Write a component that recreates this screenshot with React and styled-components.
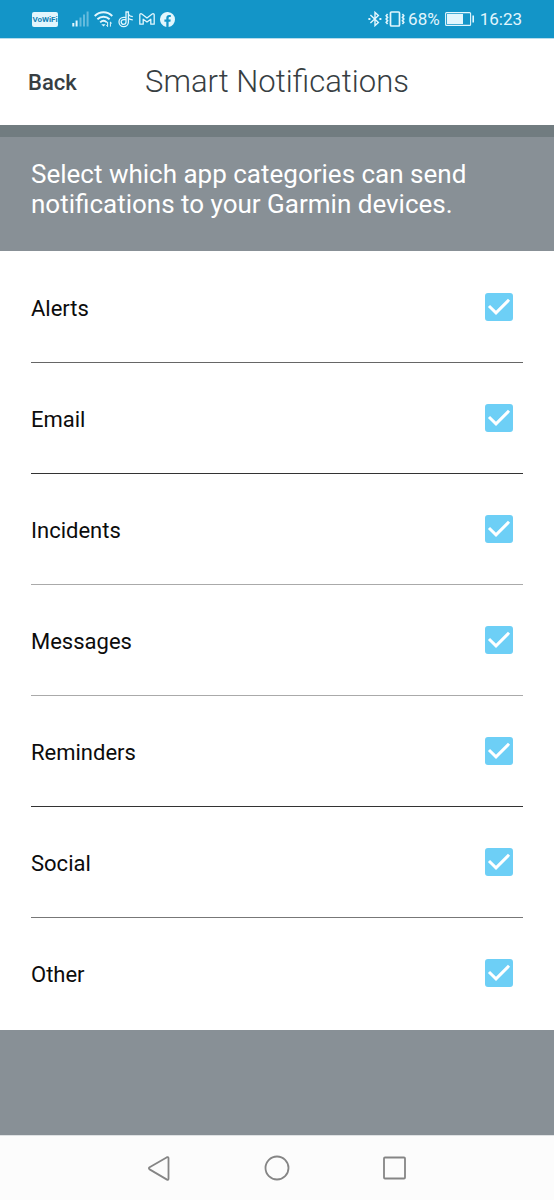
import React, { useState } from "react";
import styled, { createGlobalStyle } from "styled-components";

const GlobalStyle = createGlobalStyle`
    * {
        box-sizing: border-box;
    }
    body {
        margin: 0;
        background: #889096;
        font-family: Roboto, "Liberation Sans", sans-serif;
    }
`

const Screen = styled.div`
    display: flex;
    flex-direction: column;
    min-height: 100vh;
    background: #889096;
`

const StatusBar = styled.div`
    display: flex;
    justify-content: space-between;
    align-items: center;
    height: 39px;
    padding: 0 32px;
    background: #1395c8;
    border-bottom: 1px solid #b5dcec;
    color: #e2f6fd;
    font-size: 17px;
    line-height: 20px;
`

const StatusGroup = styled.div`
    display: flex;
    align-items: center;
    gap: ${props => props.$gap}px;

    svg {
        display: block;
    }
`

const Badge = styled.span`
    width: 26px;
    height: 15px;
    margin-right: 9px;
    border-radius: 2px;
    background: #e2f6fd;
    color: #1382b4;
    font-size: 8px;
    font-weight: 700;
    line-height: 15px;
    text-align: center;
`

const Header = styled.header`
    display: grid;
    grid-template-columns: 1fr auto 1fr;
    align-items: center;
    height: 86px;
    padding: 0 28px;
    background: #fff;
    color: #373e42;
`

const BackButton = styled.button`
    justify-self: start;
    padding: 0;
    border: none;
    background: none;
    color: inherit;
    font-family: inherit;
    font-size: 22px;
    font-weight: 500;
    cursor: pointer;
`

const Title = styled.h1`
    margin: 0;
    font-size: 31px;
    font-weight: 300;
    line-height: 40px;
`

const Intro = styled.p`
    margin: 0;
    padding: 22px 31px 32px;
    border-top: 12px solid #717c80;
    color: #fff;
    font-size: 26px;
    line-height: 30px;
`

const List = styled.ul`
    margin: 0;
    padding: 1px 31px;
    background: #fff;
    list-style: none;
`

const Row = styled.li`
    height: 111px;
    border-bottom: 1px solid ${props => props.$line};
`

const RowLabel = styled.label`
    display: flex;
    justify-content: space-between;
    align-items: center;
    height: 100%;
    padding-right: 10px;
    color: #0c0c0c;
    font-size: 22px;
    line-height: 28px;
    cursor: pointer;
`

const RowName = styled.span`
    padding-top: 4px;
`

const CheckWrap = styled.span`
    display: grid;

    > * {
        grid-area: 1 / 1;
    }
    svg {
        pointer-events: none;
    }
`

const Check = styled.input`
    appearance: none;
    width: 28px;
    height: 28px;
    margin: 0;
    border: 2px solid #6dcff6;
    border-radius: 3px;
    background: #fff;
    cursor: pointer;

    &:checked {
        background: #6dcff6;
    }
`

const NavBar = styled.nav`
    display: flex;
    justify-content: center;
    align-items: center;
    gap: 90px;
    height: 65px;
    margin-top: auto;
    border-top: 1px solid #dfe2e4;
    background: #fcfcfc;
`

const NavButton = styled.button`
    width: 28px;
    height: 28px;
    padding: 0;
    border: none;
    background: none;
    cursor: pointer;

    svg {
        display: block;
        fill: none;
        stroke: #858585;
        stroke-width: 1.8;
        stroke-linejoin: round;
    }
`

const categories = [
    { name: "Alerts", line: "#666" },
    { name: "Email", line: "#333" },
    { name: "Incidents", line: "#aaa" },
    { name: "Messages", line: "#aaa" },
    { name: "Reminders", line: "#333" },
    { name: "Social", line: "#777" },
    { name: "Other", line: "transparent" }
];

const SignalIcon = () => (
    <svg width="17" height="16" viewBox="0 0 17 16" fill="currentColor">
        <path d="M0.3 12h2v3.5h-2zM3.6 9.5h2v6h-2z" />
        <path d="M7.5 6.5h2v9h-2zM11 3.5h2v12h-2zM14.6 0.5h2v15h-2z" opacity="0.4" />
    </svg>
)

const WifiIcon = () => (
    <svg width="19" height="16" viewBox="0 0 19 16" fill="none" stroke="currentColor" strokeWidth="1.9">
        <path d="M0.7 5C5.8 0 13.2 0 18.3 5" />
        <path d="M3.4 8.3c3.6-3.4 8.6-3.4 12.2 0" />
        <path d="M6.2 11.4c2-1.9 4.6-1.9 6.6 0" />
        <path d="M7.3 13.2h4.4L9.5 15.6z" fill="currentColor" stroke="none" />
        <path d="M13.6 11v4.6M12.3 14.3l1.3 1.3M16.4 15.6V11M17.8 12.4L16.4 11" strokeWidth="1" />
    </svg>
)

const NoteIcon = () => (
    <svg width="16" height="17" viewBox="0 0 16 17" fill="none" stroke="currentColor" strokeWidth="1.3">
        <path d="M8 6.3H5.6a4.7 4.7 0 1 0 4.8 4.7V1H8v10a2.4 2.4 0 1 1-2.4-2.4H8" />
        <path d="M10.4 3.2c.8 1.4 2 2.2 4.4 2.4M10.4 7.6c1 .8 2.2 1.2 4.4 1.2" />
    </svg>
)

const MailIcon = () => (
    <svg width="16" height="12" viewBox="0 0 16 12" fill="none" stroke="currentColor" strokeWidth="1.3" strokeLinejoin="round">
        <path d="M.8 11.2V1.8C.8.8 2 .4 2.8 1L8 5l5.2-4c.8-.6 2-.2 2 .8v9.4h-3.4V6.2L8 9 4.2 6.2v5z" />
    </svg>
)

const FacebookIcon = () => (
    <svg width="15" height="15" viewBox="0 0 15 15" fill="currentColor">
        <path d="M15 7.5A7.5 7.5 0 1 0 6.3 14.9V9.7H4.4V7.5h1.9V5.9c0-1.9 1.1-2.9 2.8-2.9.8 0 1.7.1 1.7.1V5H9.8c-.9 0-1.2.6-1.2 1.2v1.3h2.1l-.3 2.2H8.6v5.2A7.5 7.5 0 0 0 15 7.5z" />
    </svg>
)

const BluetoothIcon = () => (
    <svg width="14" height="16" viewBox="0 0 14 16" fill="none" stroke="currentColor" strokeWidth="1.4">
        <path d="M2.4 4l8 7.4L7 14.6V1.4l3.4 3.2L2.4 12" />
        <path d="M.4 8h2M11.4 8h2" strokeWidth="2" />
    </svg>
)

const VibrateIcon = () => (
    <svg width="20" height="16" viewBox="0 0 20 16" fill="none" stroke="currentColor" strokeWidth="1.7">
        <rect x="5.5" y="1" width="9" height="14" rx="1" />
        <path d="M2.6 3L1.2 4.7l1.4 1.7L1.2 8l1.4 1.7-1.4 1.6L2.6 13M17.4 3l1.4 1.7-1.4 1.7L18.8 8l-1.4 1.7 1.4 1.6-1.4 1.7" strokeWidth="1.6" />
    </svg>
)

const BatteryIcon = () => (
    <svg width="30" height="14" viewBox="0 0 30 14">
        <rect x="0.6" y="0.6" width="25" height="12.8" rx="1" fill="none" stroke="currentColor" strokeWidth="1.1" />
        <rect x="2" y="2" width="16" height="10" fill="currentColor" />
        <rect x="27.4" y="3.5" width="1.6" height="7" fill="currentColor" />
    </svg>
)

const CheckMark = () => (
    <svg width="28" height="28" viewBox="0 0 28 28" fill="none" stroke="#fff" strokeWidth="3">
        <path d="M4 13l7 6.8L24 6.8" />
    </svg>
)

const App = () => {
    const [checked, setChecked] = useState(
        Object.fromEntries(categories.map(category => [category.name, true]))
    );

    const toggle = name => {
        setChecked({ ...checked, [name]: !checked[name] });
    };

    return (
        <Screen>
            <GlobalStyle />
            <StatusBar>
                <StatusGroup $gap={5}>
                    <Badge>VoWiFi</Badge>
                    <SignalIcon />
                    <WifiIcon />
                    <NoteIcon />
                    <MailIcon />
                    <FacebookIcon />
                </StatusGroup>
                <StatusGroup $gap={5}>
                    <StatusGroup $gap={3}>
                        <BluetoothIcon />
                        <VibrateIcon />
                        <span>68%</span>
                    </StatusGroup>
                    <BatteryIcon />
                    <span>16:23</span>
                </StatusGroup>
            </StatusBar>
            <Header>
                <BackButton type="button">Back</BackButton>
                <Title>Smart Notifications</Title>
            </Header>
            <Intro>
                Select which app categories can send notifications to your Garmin devices.
            </Intro>
            <List>
                {categories.map(({ name, line }) => (
                    <Row key={name} $line={line}>
                        <RowLabel htmlFor={name}>
                            <RowName>{name}</RowName>
                            <CheckWrap>
                                <Check
                                    id={name}
                                    type="checkbox"
                                    name={name}
                                    checked={checked[name]}
                                    onChange={() => toggle(name)}
                                />
                                {checked[name] && <CheckMark />}
                            </CheckWrap>
                        </RowLabel>
                    </Row>
                ))}
            </List>
            <NavBar>
                <NavButton type="button" aria-label="Back">
                    <svg width="28" height="28" viewBox="0 0 28 28">
                        <path d="M4.6 13.2L22 3.2q1.5-.6 1.5 1v20.6q0 1.4-1.5.8L4.6 15.4q-1.4-1.1 0-2.2z" />
                    </svg>
                </NavButton>
                <NavButton type="button" aria-label="Home">
                    <svg width="28" height="28" viewBox="0 0 28 28">
                        <circle cx="14" cy="14" r="11.5" />
                    </svg>
                </NavButton>
                <NavButton type="button" aria-label="Recent apps">
                    <svg width="28" height="28" viewBox="0 0 28 28">
                        <rect x="3" y="3.5" width="21" height="21" rx="1" />
                    </svg>
                </NavButton>
            </NavBar>
        </Screen>
    )
}

export default App;
